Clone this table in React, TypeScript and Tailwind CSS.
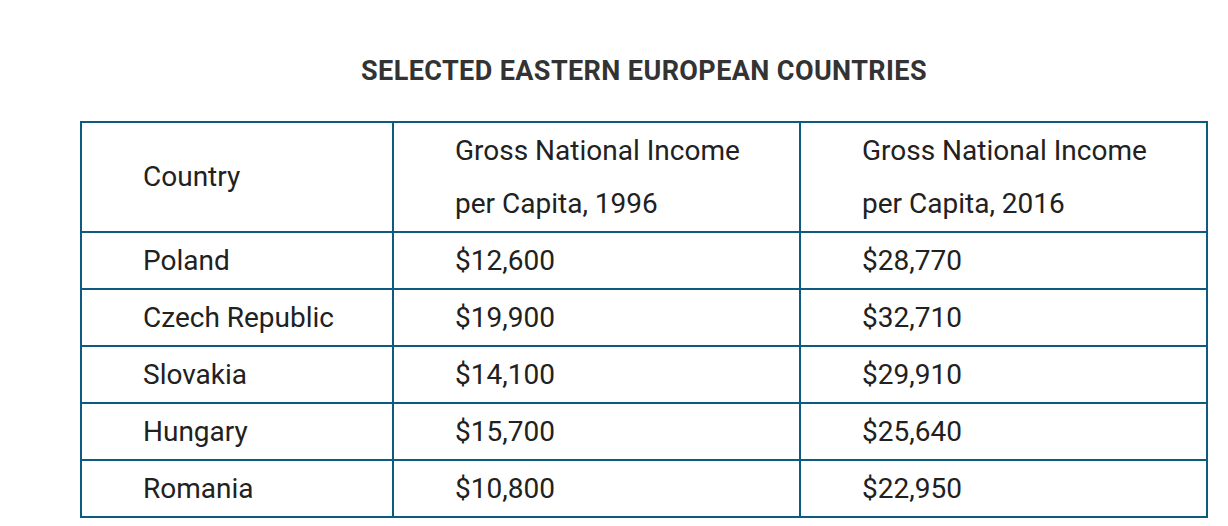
const rows = [
  ["Poland", "$12,600", "$28,770"],
  ["Czech Republic", "$19,900", "$32,710"],
  ["Slovakia", "$14,100", "$29,910"],
  ["Hungary", "$15,700", "$25,640"],
  ["Romania", "$10,800", "$22,950"],
]

export default function App() {
  return (
    <div className="min-h-[526px] bg-white font-['Roboto',sans-serif] text-[#212121]">
      <div className="ml-[80px] w-[1128px]">
        <h2 className="pt-[54px] text-center text-[27px] font-bold leading-[34px] tracking-[0.4px] text-[#333]">
          SELECTED EASTERN EUROPEAN COUNTRIES
        </h2>
        <table className="mt-[33px] w-full border-collapse text-[28px]">
          <colgroup>
            <col className="w-[312px]" />
            <col className="w-[407px]" />
            <col className="w-[407px]" />
          </colgroup>
          <thead>
            <tr className="h-[110px]">
              <th className="border-2 border-[#0e5b82] pl-[61px] text-left font-normal">Country</th>
              <th className="border-2 border-[#0e5b82] pl-[61px] text-left font-normal leading-[53px]">
                Gross National Income
                <br />
                per Capita, 1996
              </th>
              <th className="border-2 border-[#0e5b82] pl-[61px] text-left font-normal leading-[53px]">
                Gross National Income
                <br />
                per Capita, 2016
              </th>
            </tr>
          </thead>
          <tbody>
            {rows.map((r) => (
              <tr key={r[0]} className="h-[57px]">
                {r.map((c, i) => (
                  <td key={i} className="border-2 border-[#0e5b82] pl-[61px] leading-[40px]">
                    {c}
                  </td>
                ))}
              </tr>
            ))}
          </tbody>
        </table>
      </div>
    </div>
  )
}
